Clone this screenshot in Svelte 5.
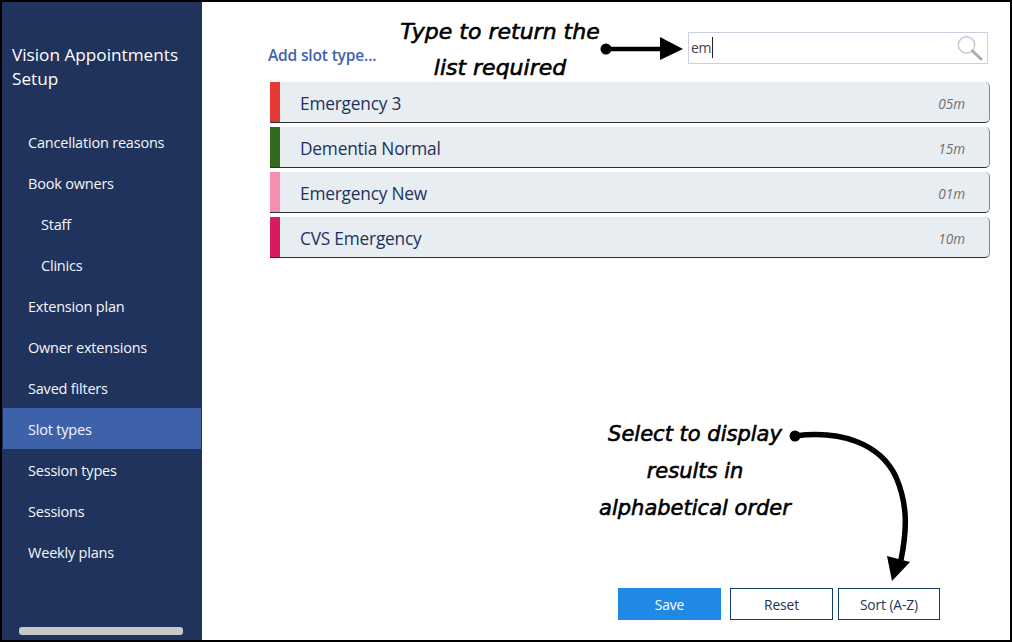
<script lang="ts">
	const nav = [
		{ label: 'Cancellation reasons' },
		{ label: 'Book owners' },
		{ label: 'Staff', sub: true },
		{ label: 'Clinics', sub: true },
		{ label: 'Extension plan' },
		{ label: 'Owner extensions' },
		{ label: 'Saved filters' },
		{ label: 'Slot types', active: true },
		{ label: 'Session types' },
		{ label: 'Sessions' },
		{ label: 'Weekly plans' }
	];
	const slots = [
		{ name: 'Emergency 3', time: '05m', color: '#e53935' },
		{ name: 'Dementia Normal', time: '15m', color: '#33691e' },
		{ name: 'Emergency New', time: '01m', color: '#f48fb1' },
		{ name: 'CVS Emergency', time: '10m', color: '#d81b60' }
	];
</script>

<div class="frame">
	<aside class="side">
		<h1>Vision Appointments Setup</h1>
		<nav>
			{#each nav as item}
				<div class="nav-item" class:sub={item.sub} class:active={item.active}>{item.label}</div>
			{/each}
		</nav>
		<div class="scroll"></div>
	</aside>

	<main>
		<div class="top">
			<span class="add">Add slot type...</span>
			<div class="search">
				<span class="typed">em</span><span class="caret"></span>
				<svg width="28" height="26" viewBox="0 0 28 26">
					<circle cx="10.5" cy="10" r="8.2" fill="none" stroke="#c3c8cc" stroke-width="1.4" />
					<path d="M16.5 16 L25 24" stroke="#a9afb3" stroke-width="3" stroke-linecap="round" />
				</svg>
			</div>
		</div>

		<div class="slots">
			{#each slots as s}
				<div class="slot">
					<span class="swatch" style="background:{s.color}"></span>
					<span class="name">{s.name}</span>
					<span class="time">{s.time}</span>
				</div>
			{/each}
		</div>

		<div class="actions">
			<button class="save">Save</button>
			<button class="reset">Reset</button>
			<button class="sort">Sort (A-Z)</button>
		</div>
	</main>

	<div class="note n1">Type to return the<br />list required</div>
	<div class="note n2">Select to display<br />results in<br />alphabetical order</div>
	<svg class="arrows" width="1012" height="642" viewBox="0 0 1012 642">
		<circle cx="606" cy="49" r="5.5" />
		<path d="M606 49 L662 49" stroke="#000" stroke-width="4.5" fill="none" />
		<path d="M660 37 L683 49 L660 60 Z" />
		<circle cx="795" cy="436" r="5.5" />
		<path d="M795 436 C840 430 880 443 896 477 C908 505 907 530 901 560" stroke="#000" stroke-width="5.5" fill="none" />
		<path d="M887 556 L910 562 L892 581 Z" />
	</svg>
</div>

<style>
	:global(body) { margin:0; background:#fff; }
	.frame {
		position:relative; box-sizing:border-box; width:1012px; height:642px;
		display:flex; border:2px solid #000; overflow:hidden;
		font-family:"Open Sans", "Noto Sans", sans-serif;
	}
	.side {
		width:200px; flex:none; background:#20335c; color:#fff;
		display:flex; flex-direction:column;
	}
	h1 {
		margin:41px 10px 0; font-size:17.2px; line-height:24px; font-weight:400;
	}
	nav { margin-top:31px; display:flex; flex-direction:column; }
	.nav-item {
		height:41px; line-height:41px; padding-left:26px; font-size:14.5px;
		letter-spacing:-0.2px; color:#f4f6fa;
	}
	.nav-item.sub { padding-left:39px; }
	.nav-item.active {
		background:#3e62aa; margin:-1px 1px 1px 1px; padding-left:25px; line-height:43px;
	}
	.scroll {
		margin:auto 0 0 17px; width:164px; height:8px; border-radius:3px;
		background:#c8c8c8; position:relative; top:-5px;
	}
	main { flex:1; display:flex; flex-direction:column; padding:30px 20px 20px 66px; min-width:0; }
	.top { display:flex; justify-content:space-between; align-items:center; height:31px; padding-right:2px; }
	.add { color:#4263ad; font-size:15.6px; font-weight:600; letter-spacing:-0.2px; position:relative; top:7px; }
	.search {
		box-sizing:border-box; width:300px; height:32px; border:1px solid #c9d0e0;
		display:flex; align-items:center; padding:0 3px 0 2px; font-size:14px; color:#444;
		letter-spacing:-0.3px;
	}
	.caret { width:1px; height:21px; background:#222; margin-left:1px; }
	.search svg { margin-left:auto; }
	.slots { margin-top:19px; margin-left:2px; display:flex; flex-direction:column; gap:4px; }
	.slot {
		height:41px; display:flex; align-items:center; background:#e7edf1;
		border-radius:0 5px 5px 0; border-bottom:1px solid #2a2f3a; border-right:1px solid #858a90;
		box-sizing:border-box;
	}
	.swatch { width:10px; align-self:stretch; }
	.name { margin-left:20px; font-size:17.3px; color:#20335c; letter-spacing:-0.2px; position:relative; top:1px; }
	.time { margin-left:auto; margin-right:24px; font-size:13.6px; font-style:italic; color:#6d7175; position:relative; top:1px; }
	.actions { margin-top:auto; display:flex; justify-content:flex-end; gap:5px; padding-right:50px; }
	button {
		box-sizing:border-box; width:103px; height:32px; padding:0; background:#fff;
		border:1px solid #123d6b; font:inherit; font-size:13.8px; letter-spacing:-0.1px; color:#20335c; border-radius:0;
	}
	button.save { background:#2089e6; border-color:#2089e6; color:#fff; margin-right:4px; }
	button.sort { width:102px; }
	.note {
		position:absolute; font-family:"DejaVu Sans", sans-serif; font-style:italic; color:#000;
		font-weight:400; text-align:center; line-height:36px;
		-webkit-text-stroke:0.6px #000;
	}
	.n1 { left:393px; top:12px; width:210px; font-size:22px; }
	.n2 { left:588px; top:414px; width:210px; line-height:37px; font-size:21px; }
	.arrows { position:absolute; left:-2px; top:-2px; pointer-events:none; }
</style>
